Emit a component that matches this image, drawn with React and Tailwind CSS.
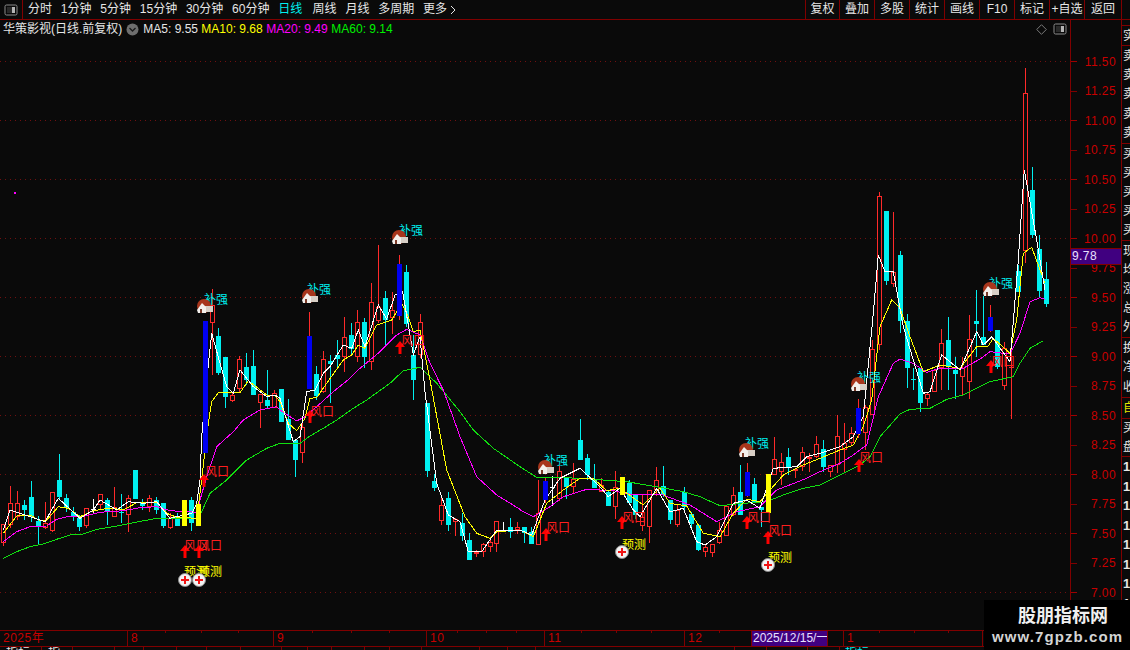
const STEP = 6.95;

// candle rows: [bodyTop, bodyBottom, wickTop, wickBottom, kind], measured per section of the chart
const sections = [
  { ox: 0, oy: 280, rows: [
    [733,790,733,800,"r"],[670,735,618,745,"r"],[670,710,632,720,"r"],[676,690,660,720,"c"],[651,708,603,725,"c"],
    [722,738,708,792,"c"],[728,745,666,748,"r"],[637,752,637,758,"r"],[600,652,522,660,"c"],[654,685,642,695,"c"],
    [695,708,680,722,"c"],[715,740,705,752,"c"],[685,737,685,745,"r"],[686,689,658,700,"w"],[643,675,643,690,"r"],
    [660,692,655,735,"c"],[680,712,622,712,"r"],[695,700,642,730,"c"],[655,704,645,755,"r"],[570,657,570,657,"c"],
    [670,677,657,690,"c"],[655,680,645,695,"r"],[660,690,650,700,"c"],[670,738,670,745,"c"],[715,745,700,748,"r"],
    [708,738,700,740,"c"],[660,737,660,737,"y"],[660,730,650,752,"c"],[672,737,672,737,"y"],[123,518,123,518,"b"],
    [75,128,28,285,"r"],[168,280,145,285,"c"],[232,352,232,385,"c"],[345,362,335,365,"r"],[238,328,228,340,"r"],
    [262,300,220,315,"c"],[258,345,210,345,"c"],[343,368,343,445,"r"],[360,377,270,385,"c"],[340,385,330,385,"r"],
    [327,425,327,425,"c"],[418,480,358,480,"c"],[480,540,480,590,"c"],
  ]},
  { ox: 280, oy: 220, rows: [
    [622,700,598,730,"r"],[348,508,277,508,"b"],[462,527,437,540,"c"],[418,516,393,520,"r"],[424,432,405,548,"c"],
    [405,418,360,440,"c"],[350,410,292,458,"r"],[345,387,308,408,"c"],[305,410,270,425,"r"],[305,410,295,445,"c"],
    [245,425,190,450,"r"],[262,302,75,310,"r"],[235,300,212,378,"c"],[270,295,215,340,"r"],[132,287,105,300,"b"],
    [156,312,135,320,"c"],[405,480,345,540,"c"],[307,405,283,415,"r"],[548,752,548,770,"c"],[783,804,762,812,"c"],
    [855,902,825,916,"r"],[834,914,815,932,"c"],[898,905,895,950,"r"],[910,948,880,965,"c"],[960,1020,940,1020,"c"],
    [995,1003,990,1012,"r"],[972,995,970,1012,"r"],[965,980,950,995,"r"],[902,972,902,995,"r"],[929,932,905,935,"w"],
    [922,935,895,955,"c"],[920,930,905,940,"r"],
  ]},
  { ox: 520, oy: 400, rows: [
    [380,400,380,428,"c"],[395,432,382,432,"c"],[338,434,240,434,"r"],[244,302,235,310,"b"],[262,265,228,318,"w"],
    [214,298,195,302,"r"],[235,262,235,298,"c"],[236,262,190,280,"r"],[120,180,58,180,"c"],[174,225,162,240,"c"],
    [238,264,192,265,"c"],[255,275,235,278,"r"],[277,317,270,317,"c"],[262,322,212,355,"r"],[232,285,232,285,"y"],
    [248,308,240,310,"c"],[285,345,285,358,"c"],[350,378,283,395,"r"],[270,380,270,430,"r"],[240,270,202,290,"r"],
    [258,285,198,290,"c"],[300,360,300,372,"c"],[330,375,315,380,"r"],[275,320,262,330,"c"],[342,372,335,380,"c"],
    [375,450,375,452,"c"],[442,455,435,472,"r"],[432,458,432,472,"r"],[390,430,365,430,"r"],[318,408,318,408,"r"],
    [286,345,262,350,"r"],[277,345,195,345,"c"],[216,288,190,292,"b"],[252,310,235,310,"c"],[320,330,320,380,"c"],
    [222,338,222,338,"y"],[178,225,110,225,"r"],[187,217,160,255,"r"],[172,200,145,225,"c"],[208,214,205,235,"r"],
    [157,200,140,212,"r"],[172,176,160,218,"r"],[133,172,108,175,"r"],
  ]},
  { ox: 790, oy: 410, rows: [
    [118,172,90,185,"c"],[165,187,165,200,"r"],[78,165,15,190,"r"],[100,120,40,190,"r"],[70,100,50,105,"r"],
  ]},
  { ox: 840, oy: 160, rows: [
    [743,820,717,835,"b"],[740,820,735,870,"r"],[568,765,540,765,"r"],[108,555,97,572,"r"],[153,362,153,375,"c"],
    [335,373,155,380,"r"],[285,483,273,518,"c"],[483,623,462,685,"c"],[657,661,625,690,"c"],[625,728,625,758,"c"],
    [703,718,700,738,"r"],[630,697,630,697,"r"],[550,625,507,690,"r"],[540,622,472,690,"c"],[630,643,590,715,"c"],
    [625,652,590,705,"r"],[538,667,465,718,"r"],[484,491,390,592,"c"],[530,556,408,556,"c"],[472,515,435,515,"b"],
    [510,620,510,628,"c"],[565,677,545,688,"r"],[620,625,530,775,"r"],[333,397,315,397,"c"],[-201,272,-276,310,"r"],
    [90,225,22,235,"c"],[268,392,225,410,"c"],[357,432,305,440,"c"],
  ]},
];

const candles = sections
  .flatMap((s) => s.rows.map((r) => ({ top: s.oy + r[0] / 3, bottom: s.oy + r[1] / 3, hi: s.oy + r[2] / 3, lo: s.oy + r[3] / 3, kind: r[4] })))
  .map((c, i) => ({ ...c, x: Math.round(3 + i * STEP) }));

const line = (parts) =>
  parts
    .flatMap(([ox, oy, pts]) => pts.map(([x, y]) => `${(ox + x / 3).toFixed(1)},${(oy + y / 3).toFixed(1)}`))
    .join(" ");

const ma60 = line([
  [0, 280, [[10,835],[50,815],[90,800],[130,792],[170,778],[210,765],[250,762],[290,748],[340,740],[400,728],[470,715],[540,715],[590,715],[605,695],[630,640],[680,600],[740,540],[800,505],[840,490]]],
  [280, 220, [[0,672],[60,670],[90,648],[130,625],[170,600],[220,565],[260,540],[330,490],[370,452],[420,442],[470,490],[540,575],[580,630],[640,685],[720,740]]],
  [520, 400, [[0,200],[50,232],[100,232],[180,235],[250,240],[320,245],[420,262],[490,275],[540,290],[600,317],[670,310],[740,305],[790,285],[850,265],[900,255]]],
  [840, 160, [[0,945],[60,915],[90,890],[120,830],[180,762],[210,748],[270,745],[320,718],[370,705],[450,665],[520,650],[540,610],[570,565],[610,542]]],
]);

const ma20 = line([
  [0, 280, [[10,785],[50,755],[90,740],[140,738],[170,718],[210,708],[240,712],[300,697],[370,692],[420,683],[470,680],[510,692],[590,697],[600,660],[620,590],[650,500],[700,455],[730,420],[780,390],[830,380]]],
  [280, 220, [[0,570],[50,603],[75,590],[110,560],[160,515],[210,475],[240,445],[300,395],[350,345],[380,328],[420,345],[450,430],[490,510],[540,650],[590,770],[650,825],[720,868]]],
  [520, 400, [[0,330],[40,350],[90,320],[130,290],[200,268],[280,272],[340,285],[420,282],[510,315],[590,365],[650,335],[720,320],[770,270],[860,235],[900,215]]],
  [840, 160, [[0,910],[40,885],[80,855],[115,710],[160,610],[180,597],[220,610],[260,637],[300,625],[370,625],[420,597],[450,575],[510,582],[540,520],[570,425],[600,413],[615,418]]],
]);

const ma10 = line([
  [0, 280, [[10,760],[50,708],[90,705],[120,722],[140,720],[175,680],[205,685],[240,710],[280,692],[330,684],[370,690],[410,668],[470,668],[500,700],[530,712],[590,715],[600,640],[625,430],[635,365],[655,338],[720,338],[745,302],[800,345],[825,345]]],
  [280, 220, [[0,545],[25,610],[50,632],[75,595],[90,535],[110,533],[140,490],[190,420],[215,405],[235,375],[255,385],[290,315],[335,300],[365,250],[385,290],[400,335],[420,330],[450,480],[500,750],[555,890],[590,940],[630,955],[650,935],[720,930]]],
  [520, 400, [[0,390],[40,410],[80,310],[130,270],[180,235],[220,235],[260,272],[300,265],[370,315],[420,265],[450,310],[500,318],[550,400],[600,410],[640,340],[680,298],[720,305],[750,270],[790,225],[850,195],[900,175]]],
  [840, 160, [[0,870],[40,855],[70,800],[95,720],[120,500],[155,420],[180,445],[210,530],[250,635],[300,615],[360,625],[410,560],[445,558],[460,535],[510,580],[530,480],[550,280],[575,262],[615,370]]],
]);

const ma5 = line([
  [0, 280, [[10,750],[30,690],[90,710],[135,725],[175,655],[240,715],[280,690],[300,660],[350,690],[385,665],[430,670],[470,665],[510,715],[530,710],[575,700],[590,670],[600,600],[605,470],[625,255],[635,160],[660,250],[680,320],[700,340],[720,270],[760,320],[800,350],[825,345]]],
  [280, 220, [[0,535],[40,665],[60,650],[80,515],[105,510],[130,460],[150,440],[190,375],[215,385],[235,330],[255,380],[295,255],[320,297],[345,225],[368,215],[400,405],[420,350],[435,515],[470,790],[505,885],[540,905],[565,995],[605,995],[650,930],[720,930]]],
  [520, 400, [[0,390],[35,405],[75,300],[120,235],[180,205],[240,260],[265,290],[300,265],[340,330],[360,350],[410,265],[450,335],[490,325],[530,425],[555,435],[590,410],[640,310],[680,300],[720,325],[760,205],[830,200],[860,170],[900,160]]],
  [840, 160, [[0,860],[40,830],[70,770],[100,460],[115,285],[135,335],[160,335],[190,500],[250,700],[270,695],[305,585],[360,630],[410,515],[430,555],[455,530],[510,605],[535,300],[553,30],[590,240],[615,390]]],
]);

const bu = [[216,304,205,307],[319,294,310,297],[411,235,400,238],[556,465,546,468],[757,448,747,451],[869,382,859,385],[1001,288,991,290]];
const wind = [[204,481,205,476],[185,552,184,550],[199,552,198,550],[310,417,310,416],[400,348,401,345],[546,535,546,532],[622,523,622,522],[747,523,747,522],[768,538,768,535],[859,466,859,462],[991,367,991,366]];
const predict = [[185,580,184,576],[199,580,198,576],[622,552,622,549],[768,565,768,562]];

const prices = ["11.50","11.25","11.00","10.75","10.50","10.25","10.00","9.75","9.50","9.25","9.00","8.75","8.50","8.25","8.00","7.75","7.50","7.25","7.00"];
const grid = [61,120,179,238,297,356,415,474,533,592];

const tabs = ["分时","1分钟","5分钟","15分钟","30分钟","60分钟","日线","周线","月线","多周期"];
const tools = ["复权","叠加","多股","统计","画线","F10","标记","+自选","返回"];

const segments = [
  { w: 127, label: "2025年", ticks: [] },
  { w: 146, label: "8", ticks: [37,73,110] },
  { w: 153, label: "9", ticks: [38,77,115] },
  { w: 118, label: "10", ticks: [30,59,89] },
  { w: 140, label: "11", ticks: [36,71,106] },
  { w: 67, label: "12", ticks: [34] },
];

const sideCells = [
  { h: 20, text: ["实"] },
  { h: 98, text: ["卖","卖","卖","卖","卖"] },
  { h: 97, text: ["买","买","买","买","买"] },
  { h: 97, text: ["现","均","涨","总","外"] },
  { h: 60, text: ["换","净","收"] },
  { h: 21, text: ["自"], yellow: true },
  { h: 38, text: ["买","盘"] },
];

const footer = [
  { w: 42, text: "指标" },{ w: 31, text: "指" },{ w: 42 },{ w: 29 },{ w: 33 },{ w: 30 },{ w: 34 },{ w: 41 },
  { w: 26 },{ w: 24 },{ w: 33 },{ w: 25 },{ w: 32 },{ w: 58 },{ w: 28 },{ w: 28 },{ w: 199 },{ w: 32 },{ w: 41 },{ w: 32 },
];

function Toggle() {
  return (
    <svg width="14" height="12" viewBox="0 0 14 12">
      <rect x="1" y="1" width="12" height="10" rx="1.5" fill="none" stroke="#8c8c8c" />
      <rect x="8" y="3" width="3" height="6" fill="#b5b5b5" />
      <rect x="3" y="3" width="5" height="6" fill="#2a2a2a" />
    </svg>
  );
}

function House({ x, y }) {
  return (
    <g transform={`translate(${x} ${y})`}>
      <circle cx="-1" cy="-1" r="7" fill="#a8361c" />
      <rect x="-1" y="-1" width="9" height="6" fill="#d8cfc6" />
      <polygon points="-8,3 -3,-4 1,0 1,6 -7,6" fill="#f4f0ec" />
      <rect x="-5" y="2" width="2" height="4" fill="#7a3a28" />
    </g>
  );
}

function Arrow({ x, y }) {
  return <polygon transform={`translate(${x} ${y})`} points="0,-7 5,-1 1.5,-1 1.5,6 -1.5,6 -1.5,-1 -5,-1" fill="#ff0000" />;
}

function Plus({ x, y }) {
  return (
    <g transform={`translate(${x} ${y})`}>
      <circle r="6.5" fill="#f2f2f2" stroke="#8a8a8a" />
      <rect x="-4" y="-1" width="8" height="2" fill="#f01414" />
      <rect x="-1" y="-4" width="2" height="8" fill="#f01414" />
    </g>
  );
}

function Chart() {
  const plain = candles.filter((c) => c.kind === "r" || c.kind === "c" || c.kind === "w");
  const solid = candles.filter((c) => c.kind === "b" || c.kind === "y");
  return (
    <svg className="block w-full flex-1" viewBox="0 38 1070 592" preserveAspectRatio="none">
      {grid.map((y) => (
        <line key={y} x1="0" x2="1070" y1={y + 0.5} y2={y + 0.5} stroke="#701010" strokeDasharray="1 4" />
      ))}
      <rect x="14" y="192" width="2" height="2" fill="#ff00ff" />

      <g shapeRendering="crispEdges">
        {plain.map((c, i) => {
          const color = c.kind === "r" ? "#ff2a2a" : c.kind === "c" ? "#00f0f0" : "#ffffff";
          const top = Math.round(c.top);
          const h = Math.max(1, Math.round(c.bottom) - top);
          return (
            <g key={i}>
              <rect x={c.x} y={Math.round(c.hi)} width="1" height={Math.max(1, Math.round(c.lo - c.hi))} fill={color} />
              <rect x={c.x - 2} y={top} width="5" height={h} fill={color} />
              {c.kind === "r" && h > 2 && <rect x={c.x - 1} y={top + 1} width="3" height={h - 2} fill="#0a0a0a" />}
            </g>
          );
        })}
        <polyline points={ma60} fill="none" stroke="#10e010" />
        <polyline points={ma20} fill="none" stroke="#ff00ff" />
        <polyline points={ma10} fill="none" stroke="#ffff00" />
        <polyline points={ma5} fill="none" stroke="#ffffff" />
        {solid.map((c, i) => (
          <g key={i}>
            <rect x={c.x} y={Math.round(c.hi)} width="1" height={Math.round(c.lo - c.hi)} fill={c.kind === "b" ? "#ff2a2a" : "#ffff00"} />
            <rect x={c.x - 2} y={Math.round(c.top)} width="5" height={Math.round(c.bottom - c.top)} fill={c.kind === "b" ? "#0000f0" : "#ffff00"} />
          </g>
        ))}
      </g>

      {bu.map(([tx, ty, hx, hy]) => (
        <g key={tx}>
          <text x={tx} y={ty} textAnchor="middle" fontSize="12" fill="#00f0f0">补强</text>
          <House x={hx} y={hy} />
        </g>
      ))}
      {wind.map(([ax, ay, tx, ty]) => (
        <g key={ax}>
          <Arrow x={ax} y={ay} />
          <text x={tx} y={ty} fontSize="12" fill="#ff1e1e">风口</text>
        </g>
      ))}
      {predict.map(([cx, cy, tx, ty]) => (
        <g key={cx}>
          <text x={tx} y={ty} fontSize="12" fill="#ffff00">预测</text>
          <Plus x={cx} y={cy} />
        </g>
      ))}
    </svg>
  );
}

function PriceAxis() {
  return (
    <div className="relative w-[51px] shrink-0 border-l border-[#800000] pt-[27px]">
      {prices.map((p, i) => (
        <div key={p} className="flex h-[29.5px] items-center justify-between pr-[5px] text-[12px] tracking-[0.4px] text-[#c80000]">
          <span className={`h-px w-[6px] ${i % 2 === 0 ? "bg-[#a00000]" : "bg-[#800000]"}`} />
          <span>{p}</span>
        </div>
      ))}
      <div className="absolute left-0 right-0 top-[228px] h-[17px] border-y border-[#800000] bg-[#400080] pl-px text-[12px] leading-[15px] tracking-[0.4px] text-[#e8e0ff]">
        9.78
      </div>
    </div>
  );
}

function SideColumn() {
  return (
    <div className="w-[9px] shrink-0 overflow-hidden border-l border-[#800000] pt-[5px] text-[12px] text-[#e6e6e6]">
      {sideCells.map((cell, i) => (
        <div key={i} style={{ height: cell.h }} className={`flex flex-col justify-around overflow-hidden border-t border-[#800000] pl-px leading-[14px] ${cell.yellow ? "text-[#e6e600]" : ""}`}>
          {cell.text.map((t, j) => (
            <span key={j} className="w-[12px]">{t}</span>
          ))}
        </div>
      ))}
      <div className="flex flex-col border-t border-[#800000] pl-px">
        {[0, 1, 2, 3, 4, 5, 6, 7].map((i) => (
          <span key={i} className="h-[19.5px] text-[13px] font-bold leading-[19px]">1</span>
        ))}
      </div>
    </div>
  );
}

function DateBar() {
  return (
    <div className="flex h-[17px] border-y border-[#800000] text-[12px] leading-[15px] tracking-[0.5px] text-[#c80000]">
      {segments.map((s, i) => (
        <div key={i} style={{ width: s.w }} className={`relative shrink-0 pl-[3px] ${i > 0 ? "border-l border-[#800000]" : ""}`}>
          {s.label}
          {s.ticks.map((t) => (
            <span key={t} style={{ left: t }} className="absolute top-0 h-[2px] w-px bg-[#800000]" />
          ))}
        </div>
      ))}
      <div className="w-[77px] shrink-0 overflow-hidden whitespace-nowrap border-x border-[#800000] bg-[#400080] pl-[1px] tracking-normal text-[#e8e0ff]">2025/12/15/一</div>
      <div className="w-[15px] shrink-0" />
      <div className="relative w-[139px] shrink-0 border-l border-[#800000] pl-[3px]">
        1
        {[35, 70, 104].map((t) => (
          <span key={t} style={{ left: t }} className="absolute top-0 h-[2px] w-px bg-[#800000]" />
        ))}
      </div>
      <div className="flex-1 border-l border-[#800000]" />
    </div>
  );
}

export default function App() {
  return (
    <div className="relative flex h-[650px] w-[1130px] flex-col overflow-hidden bg-[#0a0a0a] text-[12px] text-[#e6e6e6] [font-family:'Liberation_Sans','Noto_Sans_CJK_SC',sans-serif]">
      {/* top bar */}
      <div className="flex h-5 shrink-0 items-stretch border-b border-[#800000] leading-[19px]">
        <div className="flex w-[23px] items-center justify-center border-r border-[#800000]">
          <Toggle />
        </div>
        <div className="flex flex-1 gap-[8.8px] pl-[5px]">
          {tabs.map((t) => (
            <span key={t} className={t === "日线" ? "mr-[1.5px] text-[#00f0f0]" : ""}>{t}</span>
          ))}
          <span className="flex items-center gap-[3px]">
            更多
            <svg width="6" height="10" viewBox="0 0 6 10"><path d="M1 1l4 4-4 4" fill="none" stroke="#e6e6e6" /></svg>
          </span>
        </div>
        <div className="mr-[8px] flex border-l border-[#800000]">
          {tools.map((t) => (
            <span key={t} className="w-[35px] whitespace-nowrap border-r border-[#800000] text-center first:w-[34px] last:w-[37px]">{t}</span>
          ))}
        </div>
      </div>

      <div className="flex min-h-0 flex-1">
        <div className="flex min-w-0 flex-1 flex-col">
          {/* quote line */}
          <div className="flex h-[18px] shrink-0 items-center justify-between pl-[3px] pr-[3px]">
            <div className="flex items-center">
              <span>华策影视(日线.前复权)</span>
              <svg className="ml-[4px]" width="13" height="13" viewBox="0 0 13 13">
                <circle cx="6.5" cy="6.5" r="6" fill="#6e6e6e" />
                <path d="M3.5 5l3 3 3-3" fill="none" stroke="#1a1a1a" strokeWidth="1.3" />
              </svg>
              <span className="ml-[4px] w-[58px]">MA5: 9.55</span>
              <span className="w-[65px] text-[#ffff00]">MA10: 9.68</span>
              <span className="w-[65px] text-[#ff00ff]">MA20: 9.49</span>
              <span className="text-[#00f000]">MA60: 9.14</span>
            </div>
            <div className="flex items-center gap-[6px]">
              <svg width="11" height="11" viewBox="0 0 11 11"><path d="M5.5.7l4.8 4.8-4.8 4.8L.7 5.5z" fill="none" stroke="#7a7a7a" /></svg>
              <Toggle />
            </div>
          </div>
          <Chart />
        </div>
        <PriceAxis />
        <SideColumn />
      </div>

      <DateBar />

      {/* clipped labels under the date bar */}
      <div className="flex h-[3px] shrink-0 overflow-hidden leading-[12px]">
        {footer.map((f, i) => (
          <span key={i} style={{ width: f.w }} className="shrink-0 border-r border-[#800000] pl-[6px]">{f.text}</span>
        ))}
        <span className="pl-[5px] text-[#00f0f0]">指标</span>
      </div>

      {/* site watermark */}
      <div className="absolute bottom-0 right-0 flex h-[50px] w-[146px] flex-col justify-center bg-black font-bold">
        <span className="ml-[34px] text-[18px] leading-[23px] text-[#f0f0f0]">股朋指标网</span>
        <span className="ml-[8px] whitespace-nowrap text-[15px] leading-[17px] tracking-[1.1px] text-[#d4d4d4]">www.7gpzb.com</span>
      </div>
    </div>
  );
}
